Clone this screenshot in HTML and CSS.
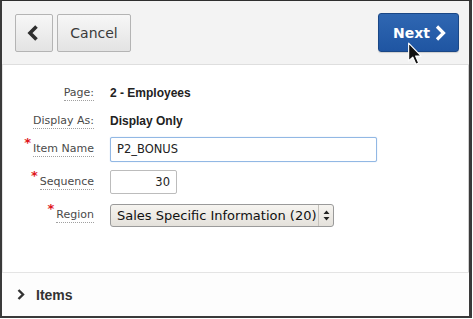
FILE: index.html
```html
<!DOCTYPE html>
<html lang="en">
<head>
<meta charset="utf-8">
<title>Create Page Item</title>
<link rel="stylesheet" href="styles.css">
</head>
<body>
<div class="frame">
  <header class="toolbar">
    <div class="toolbar-left">
      <button class="btn btn-icon" aria-label="Back">
        <svg width="12" height="16" viewBox="0 0 12 16"><path d="M9.5 1.5 L3 8 L9.5 14.5" fill="none" stroke="#2e2e2e" stroke-width="3.6" stroke-linejoin="miter"/></svg>
      </button>
      <button class="btn btn-text">Cancel</button>
    </div>
    <button class="btn btn-primary">Next
      <svg width="11" height="16" viewBox="0 0 11 16"><path d="M2 1.5 L8.5 8 L2 14.5" fill="none" stroke="#fff" stroke-width="3.2"/></svg>
    </button>
    <svg class="cursor" width="17" height="24" viewBox="0 0 14 21"><path d="M1 1 L1 16.5 L4.6 13.2 L7.4 19.5 L9.8 18.4 L7.1 12.3 L12 12.3 Z" fill="#111" stroke="#fff" stroke-width="1" stroke-linejoin="round"/></svg>
  </header>

  <main class="form">
    <div class="row row-a">
      <div class="label"><span class="lbl">Page:</span></div>
      <div class="value">2 - Employees</div>
    </div>
    <div class="row row-a">
      <div class="label"><span class="lbl">Display As:</span></div>
      <div class="value">Display Only</div>
    </div>
    <div class="row row-a">
      <div class="label"><span class="req">*</span><span class="lbl">Item Name</span></div>
      <div class="field"><div class="input input-name">P2_BONUS</div></div>
    </div>
    <div class="row row-b">
      <div class="label"><span class="req">*</span><span class="lbl">Sequence</span></div>
      <div class="field"><div class="input input-seq">30</div></div>
    </div>
    <div class="row row-a">
      <div class="label"><span class="req">*</span><span class="lbl">Region</span></div>
      <div class="field">
        <div class="select">
          <span class="select-text">Sales Specific Information (20)</span>
          <span class="select-arrows">
            <svg width="7" height="11" viewBox="0 0 7 11"><path d="M3.5 0.5 L6.5 4 L0.5 4 Z M0.5 7 L6.5 7 L3.5 10.5 Z" fill="#222"/></svg>
          </span>
        </div>
      </div>
    </div>
  </main>

  <section class="items">
    <svg width="8" height="11" viewBox="0 0 8 11"><path d="M1.5 1 L6 5.5 L1.5 10" fill="none" stroke="#333" stroke-width="2.4"/></svg>
    <span class="items-title">Items</span>
  </section>
</div>
</body>
</html>
```

FILE: styles.css
```css
* { box-sizing: border-box; }

html, body {
  margin: 0;
  padding: 0;
  background: #fff;
}

body {
  width: 473px;
  height: 319px;
  font-family: "DejaVu Sans", sans-serif;
  overflow: hidden;
}

.frame {
  position: relative;
  width: 472px;
  height: 318px;
  border-top: 1px solid #2e2e2e;
  border-left: 2px solid #3a3a3a;
  border-right: 3px solid #3a3a3a;
  border-bottom: 2px solid #3a3a3a;
  box-shadow: inset -1px -1px 0 #d0d0d0, inset 1px 0 0 #e6e6e6;
  display: flex;
  flex-direction: column;
  background: #fff;
}

.toolbar {
  position: relative;
  height: 64px;
  flex: none;
  display: flex;
  align-items: center;
  justify-content: space-between;
  padding: 0 10px 0 13px;
  background: #f3f3f3;
  border-bottom: 1px solid #dedede;
}

.toolbar-left {
  display: flex;
  gap: 4px;
}

.btn {
  height: 38px;
  margin: 0;
  font-family: "DejaVu Sans", sans-serif;
  font-size: 14px;
  border-radius: 2px;
  cursor: pointer;
  display: flex;
  align-items: center;
  justify-content: center;
}

.btn-icon,
.btn-text {
  background: linear-gradient(#f7f7f7, #e3e3e3);
  border: 1px solid #b4b4b4;
  color: #3a3a3a;
}

.btn-icon {
  width: 38px;
  padding: 0 2px 0 0;
}

.btn-text {
  width: 74px;
  padding: 0;
}

.btn-primary {
  width: 81px;
  height: 39px;
  padding: 0 0 0 2px;
  gap: 5px;
  background: linear-gradient(#2f67b2, #1f55a2);
  border: 1px solid #1a4786;
  border-radius: 3px;
  color: #fff;
  font-weight: bold;
  box-shadow: 0 1px 1px rgba(0,0,0,0.15);
}

.cursor {
  position: absolute;
  left: 405px;
  top: 41px;
}

.form {
  flex: 1;
  padding-top: 14px;
  display: flex;
  flex-direction: column;
}

.row {
  display: grid;
  grid-template-columns: 92px 1fr;
  column-gap: 16px;
  align-items: center;
}

.row-a { height: 28px; }
.row-b { height: 38px; }

.label {
  text-align: right;
  font-size: 11px;
  color: #4a4a4a;
  line-height: 13px;
}

.lbl {
  display: inline-block;
  border-bottom: 1px dotted #a0a0a0;
  padding-bottom: 1px;
}

.req {
  color: #e0161b;
  font-size: 13px;
  font-weight: bold;
  position: relative;
  top: -5px;
  margin-right: 2px;
}

.value {
  font-family: "Liberation Sans", Arial, sans-serif;
  font-weight: bold;
  font-size: 12px;
  color: #222;
}

.field {
  display: flex;
}

.input {
  height: 25px;
  background: #fff;
  border: 1px solid #bcbcbc;
  font-size: 11.5px;
  color: #222;
  display: flex;
  align-items: center;
  padding: 0 6px;
}

.input-name {
  width: 267px;
  border-color: #92b8e4;
  border-radius: 2px;
  box-shadow: 0 0 1px rgba(110,160,220,0.6);
}

.input-seq {
  width: 67px;
  height: 24px;
  justify-content: flex-end;
  border-radius: 2px;
}

.select {
  width: 224px;
  height: 23px;
  display: flex;
  align-items: center;
  border: 1px solid #9a9a9a;
  border-radius: 3px;
  background: linear-gradient(#f6f4f0, #e4e1db);
  font-size: 13px;
  color: #111;
}

.select-text {
  flex: 1;
  padding-left: 6px;
  white-space: nowrap;
}

.select-arrows {
  width: 15px;
  height: 100%;
  border-left: 1px solid #c4c1bb;
  display: flex;
  align-items: center;
  justify-content: center;
}

.items {
  flex: none;
  height: 44px;
  border-top: 1px solid #e4e4e4;
  background: #fdfdfd;
  display: flex;
  align-items: center;
  padding-left: 15px;
  gap: 11px;
}

.items-title {
  font-family: "Liberation Sans", Arial, sans-serif;
  font-weight: bold;
  font-size: 14px;
  color: #333;
}
```
